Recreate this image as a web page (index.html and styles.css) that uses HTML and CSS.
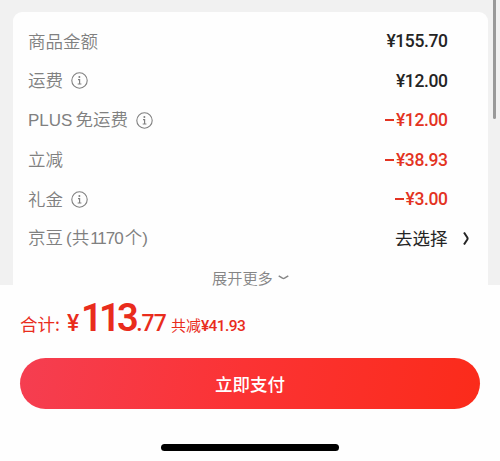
FILE: index.html
```html
<!DOCTYPE html>
<html lang="zh-CN">
<head>
<meta charset="utf-8">
<title>立即支付</title>
<link rel="stylesheet" href="styles.css">
</head>
<body>
<svg width="0" height="0" class="defs"><symbol id="info" viewBox="0 0 17 17"><circle cx="8.5" cy="8.5" r="7.7" fill="none" stroke="currentColor" stroke-width="1.1"/><circle cx="8.4" cy="5" r="1" fill="currentColor"/><path d="M7 7.6h1.6v4.2M6.7 12h3.7" fill="none" stroke="currentColor" stroke-width="1.2"/></symbol></svg>
<main class="details">
  <section class="card">
    <div class="row"><span class="label">商品金额</span><span class="price">¥155.70</span></div>
    <div class="row"><span class="label">运费</span><svg class="info"><use href="#info"/></svg><span class="price">¥12.00</span></div>
    <div class="row"><span class="label"><span class="plus">PLUS</span>免运费</span><svg class="info plus-info"><use href="#info"/></svg><span class="price red"><i></i>¥12.00</span></div>
    <div class="row"><span class="label">立减</span><span class="price red"><i></i>¥38.93</span></div>
    <div class="row"><span class="label">礼金</span><svg class="info"><use href="#info"/></svg><span class="price red"><i></i>¥3.00</span></div>
    <div class="row"><span class="label">京豆<span class="paren">(</span>共<span class="count">1170</span>个<span class="close">)</span></span><span class="choose">去选择</span><svg class="arrow" viewBox="0 0 6 13"><path d="M1 .5L4.3 5.5Q4.9 6.5 4.3 7.5L1 12.5" fill="none" stroke="currentColor" stroke-width="2"/></svg></div>
    <div class="more"><span>展开更多</span><svg class="down" viewBox="0 0 11 5"><path d="M.7.8L4.5 3.2Q5.5 3.8 6.5 3.2L10.3.8" fill="none" stroke="currentColor" stroke-width="1.4"/></svg></div>
  </section>
  <div class="scrollbar"></div>
</main>
<footer class="checkout">
  <div class="total"><span class="sum">合计:</span><span class="yen">¥</span><span class="whole">113</span><span class="cents">.77</span><span class="saved">共减</span><span class="saved-num">¥41.93</span></div>
  <button class="pay">立即支付</button>
  <div class="home"></div>
</footer>
</body>
</html>
```
FILE: styles.css
```css
* { box-sizing: border-box; }
body { margin: 0; width: 500px; height: 461px; overflow: hidden; background: #fefefe; font-family: "Noto Sans CJK SC", sans-serif; }
.defs { position: absolute; }
.details { position: relative; height: 285px; padding: 11.5px 12.5px 0; background: #f1f1f1; }
.card { height: 273.5px; padding: 10px 40px 0 15.5px; background: #fefefe; border-radius: 9px 9px 0 0; }
.row { display: flex; align-items: center; height: 39.5px; color: #808080; font-size: 17.5px; line-height: 26px; white-space: nowrap; }
.label, .choose { margin-top: -1px; }
.label { font-weight: 350; }
.plus { font-family: "Liberation Sans", sans-serif; font-size: 17px; margin-right: 3px; }
.paren, .close, .count { font-family: "Liberation Sans", sans-serif; font-size: 17px; }
.paren { margin: 0 0 0 3px; }
.count { margin: 0 2px 0 1px; letter-spacing: -1px; }
.info { width: 17px; height: 17px; margin-left: 8px; }
.plus-info { margin-left: 8px; }
.price { display: flex; align-items: center; margin-left: auto; color: #242424; font-family: Roboto, sans-serif; font-weight: 500; font-size: 17.5px; letter-spacing: -.4px; }
.red { color: #e33322; }
.price i { width: 9px; height: 2px; margin-right: 2px; background: currentColor; }
.choose { margin-left: auto; color: #242424; }
.arrow { width: 6px; height: 13px; margin: 0 -21px 0 15px; color: #242424; }
.more { display: flex; align-items: center; height: 37px; padding-left: 184px; color: #858585; font-size: 15.2px; line-height: 22px; font-weight: 350; }
.more span { margin-top: -1px; }
.down { width: 11px; height: 5px; margin-left: 5px; margin-top: 1px; }
.scrollbar { position: absolute; right: 4px; top: 0; width: 3.5px; height: 119px; border-radius: 0 0 2px 2px; background: #999; }
.checkout { height: 176px; display: flex; flex-direction: column; }
.total { display: flex; align-items: baseline; height: 73px; margin-top: -3px; margin-bottom: 3px; padding-left: 20px; color: #e92c1c; font-family: Roboto, sans-serif; font-weight: 500; white-space: nowrap; line-height: 73px; }
.sum, .saved { font-family: "Noto Sans CJK SC", sans-serif; font-weight: 400; }
.sum { font-size: 17.5px; }
.yen { margin-left: 7px; font-size: 23px; }
.whole { margin-left: 2px; margin-right: 1px; font-size: 38px; letter-spacing: -3.7px; font-weight: 600; }
.cents { font-size: 23px; letter-spacing: -.9px; }
.saved { margin-left: 5px; font-size: 15px; }
.saved-num { font-size: 15.5px; letter-spacing: -.6px; }
.pay { width: 460px; height: 51px; margin: 0 20px; padding: 0; border: 0; border-radius: 26px; background: linear-gradient(100deg, #f53e51, #fb3334 48%, #fb2b1a); color: #fff; font: 500 17.5px/51px "Noto Sans CJK SC", sans-serif; }
.home { width: 178px; height: 7px; margin: 35px 0 0 161px; border-radius: 4px; background: #000; }
```
